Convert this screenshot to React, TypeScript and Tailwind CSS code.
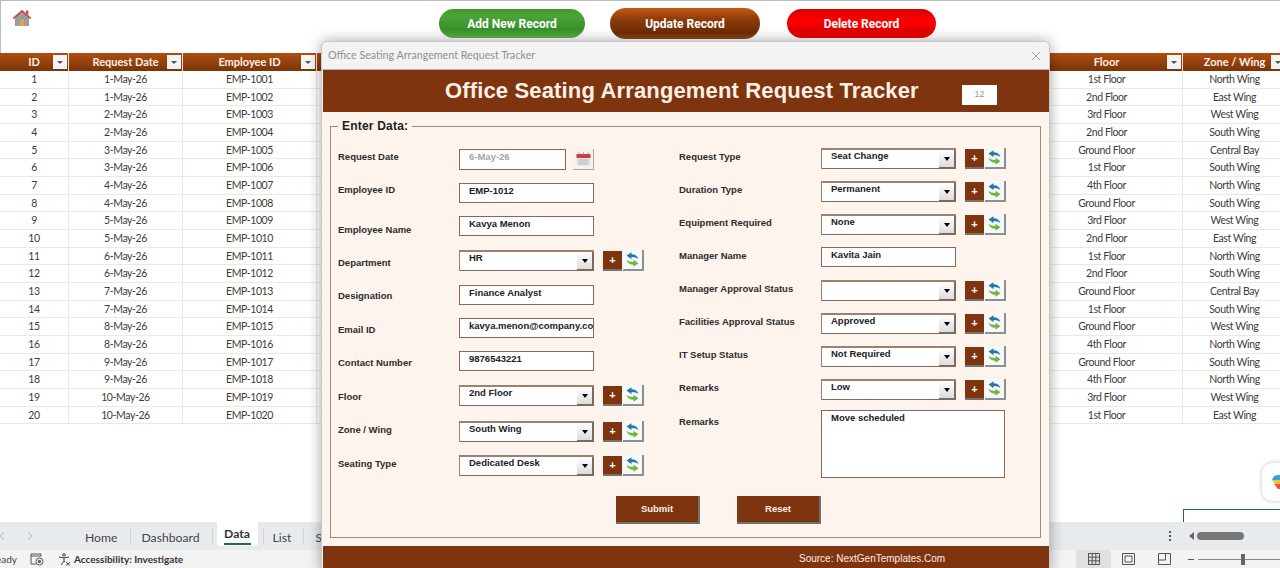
import { ChevronLeft, ChevronRight, X } from 'lucide-react'

const ROWS = [
  [1, '1-May-26', '1st Floor', 'North Wing'],
  [2, '1-May-26', '2nd Floor', 'East Wing'],
  [3, '2-May-26', '3rd Floor', 'West Wing'],
  [4, '2-May-26', '2nd Floor', 'South Wing'],
  [5, '3-May-26', 'Ground Floor', 'Central Bay'],
  [6, '3-May-26', '1st Floor', 'South Wing'],
  [7, '4-May-26', '4th Floor', 'North Wing'],
  [8, '4-May-26', 'Ground Floor', 'South Wing'],
  [9, '5-May-26', '3rd Floor', 'West Wing'],
  [10, '5-May-26', '2nd Floor', 'East Wing'],
  [11, '6-May-26', '1st Floor', 'North Wing'],
  [12, '6-May-26', '2nd Floor', 'South Wing'],
  [13, '7-May-26', 'Ground Floor', 'Central Bay'],
  [14, '7-May-26', '1st Floor', 'South Wing'],
  [15, '8-May-26', 'Ground Floor', 'West Wing'],
  [16, '8-May-26', '4th Floor', 'North Wing'],
  [17, '9-May-26', 'Ground Floor', 'South Wing'],
  [18, '9-May-26', '4th Floor', 'North Wing'],
  [19, '10-May-26', '3rd Floor', 'West Wing'],
  [20, '10-May-26', '1st Floor', 'East Wing'],
] as const

const COLS = 'grid grid-cols-[69px_114px_134px_714px_152px_104px] w-[1287px]'

type Field = { label: string; value?: string; kind: 'text' | 'combo' | 'date'; rowCls: string; labelCls: string }

const LEFT: Field[] = [
  { label: 'Request Date', value: '6-May-26', kind: 'date', rowCls: 'h-[34px]', labelCls: 'pt-[1px]' },
  { label: 'Employee ID', value: 'EMP-1012', kind: 'text', rowCls: 'h-[33px]', labelCls: 'pt-0' },
  { label: 'Employee Name', value: 'Kavya Menon', kind: 'text', rowCls: 'h-[34px]', labelCls: 'pt-[7px]' },
  { label: 'Department', value: 'HR', kind: 'combo', rowCls: 'h-[35px]', labelCls: 'pt-[6px]' },
  { label: 'Designation', value: 'Finance Analyst', kind: 'text', rowCls: 'h-[33px]', labelCls: 'pt-[4px]' },
  { label: 'Email ID', value: 'kavya.menon@company.co', kind: 'text', rowCls: 'h-[33px]', labelCls: 'pt-[5px]' },
  { label: 'Contact Number', value: '9876543221', kind: 'text', rowCls: 'h-[34px]', labelCls: 'pt-[5px]' },
  { label: 'Floor', value: '2nd Floor', kind: 'combo', rowCls: 'h-[36px]', labelCls: 'pt-[5px]' },
  { label: 'Zone / Wing', value: 'South Wing', kind: 'combo', rowCls: 'h-[34px]', labelCls: 'pt-[2px]' },
  { label: 'Seating Type', value: 'Dedicated Desk', kind: 'combo', rowCls: 'h-[34px]', labelCls: 'pt-[2px]' },
]

const RIGHT: Field[] = [
  { label: 'Request Type', value: 'Seat Change', kind: 'combo', rowCls: 'h-[33px]', labelCls: 'pt-[2px]' },
  { label: 'Duration Type', value: 'Permanent', kind: 'combo', rowCls: 'h-[33px]', labelCls: 'pt-[2px]' },
  { label: 'Equipment Required', value: 'None', kind: 'combo', rowCls: 'h-[33px]', labelCls: 'pt-[2px]' },
  { label: 'Manager Name', value: 'Kavita Jain', kind: 'text', rowCls: 'h-[33px]', labelCls: 'pt-[2px]' },
  { label: 'Manager Approval Status', value: '', kind: 'combo', rowCls: 'h-[33px]', labelCls: 'pt-[2px]' },
  { label: 'Facilities Approval Status', value: 'Approved', kind: 'combo', rowCls: 'h-[33px]', labelCls: 'pt-[2px]' },
  { label: 'IT Setup Status', value: 'Not Required', kind: 'combo', rowCls: 'h-[33px]', labelCls: 'pt-[2px]' },
  { label: 'Remarks', value: 'Low', kind: 'combo', rowCls: 'h-[31px]', labelCls: 'pt-[2px]' },
]

function HomeIcon() {
  return (
    <svg width="20" height="18" viewBox="0 0 20 18">
      <path d="M3 8 L3 17 L17 17 L17 8 L10 2 Z" fill="#9a9ea3" />
      <rect x="8" y="10" width="4" height="7" fill="#e8a33d" />
      <rect x="8.5" y="6" width="3" height="3" fill="#6fa8c9" />
      <path d="M0.5 9 L10 0.8 L19.5 9 L18 10 L10 3.4 L2 10 Z" fill="#cf4f43" />
      <rect x="14" y="1.5" width="2.4" height="4" fill="#cf4f43" />
    </svg>
  )
}

function FilterBtn({ cls }: { cls: string }) {
  return (
    <span className={`absolute top-[2px] w-[14px] h-[14px] bg-[#f4f4f4] flex items-center justify-center ${cls}`}>
      <span className="w-0 h-0 border-x-[3px] border-x-transparent border-t-[3px] border-t-[#555]" />
    </span>
  )
}

function HeadCell({ text, btnCls }: { text?: string; btnCls?: string }) {
  return (
    <div className="relative h-[18px] border-r border-[#f3e2d6] flex items-center justify-center text-[11px] font-bold text-[#fdf1e6]">
      {text}
      {btnCls && <FilterBtn cls={btnCls} />}
    </div>
  )
}

function Cell({ children }: { children?: React.ReactNode }) {
  return (
    <div className="h-[17.68px] pt-px border-r border-b border-[#f2e7df] flex items-center justify-center text-[10.5px] tracking-[-0.4px] text-[#3c3c3c]">
      {children}
    </div>
  )
}

function SheetTable() {
  return (
    <div className="font-['Lato',sans-serif]">
      <div className={`${COLS} bg-[linear-gradient(#b04e10,#8f3f0c_60%,#7a3409)]`}>
        <HeadCell text="ID" btnCls="right-[1px]" />
        <HeadCell text="Request Date" btnCls="right-[1px]" />
        <HeadCell text="Employee ID" btnCls="right-[1px]" />
        <HeadCell />
        <HeadCell text="Floor" btnCls="right-[1px]" />
        <HeadCell text="Zone / Wing" btnCls="right-[1px]" />
      </div>
      {ROWS.map(([id, date, floor, zone]) => (
        <div key={id} className={COLS}>
          <Cell>{id}</Cell>
          <Cell>{date}</Cell>
          <Cell>EMP-{1000 + id}</Cell>
          <Cell />
          <Cell>{floor}</Cell>
          <Cell>{zone}</Cell>
        </div>
      ))}
    </div>
  )
}

function ArrowBtn() {
  return (
    <span className="w-[17px] h-full bg-[linear-gradient(#ffffff,#dcdcdc)] border-r-2 border-b-2 border-[#7d6a5e] flex items-center justify-center">
      <span className="w-0 h-0 border-x-[3.5px] border-x-transparent border-t-[4px] border-t-black" />
    </span>
  )
}

function RefreshIcon() {
  return (
    <svg width="13" height="15" viewBox="0 0 13 15">
      <path d="M0.5 3.6 L5.5 0.2 V2.2 Q11 2.2 12.5 7 Q10 5 5.5 5.1 V7.2 Z" fill="#2277ad" />
      <path d="M12.5 11.2 L7.5 14.8 V12.8 Q2 12.8 0.5 8 Q3 10 7.5 9.9 V7.8 Z" fill="#6fb43f" />
    </svg>
  )
}

function AddRefresh() {
  return (
    <div className="flex h-[21px] gap-px">
      <button className="w-[19px] h-[20px] mt-px bg-[#7f3410] border-b-2 border-[#77706b] text-white text-[11px] font-bold leading-none flex items-center justify-center">+</button>
      <button className="w-[21px] h-[21px] bg-[#f7f9f9] border-r-2 border-b-2 border-[#8b9094] flex items-center justify-center">
        <RefreshIcon />
      </button>
    </div>
  )
}

function CalendarIcon() {
  return (
    <span className="w-[21px] h-[21px] ml-[7px] bg-[#f5f2f0] border-r border-b border-[#a5a5a5] flex items-center justify-center">
      <svg width="15" height="14" viewBox="0 0 15 14">
        <rect x="0.5" y="2" width="14" height="11.5" fill="#e6e6e6" />
        <rect x="0.5" y="2" width="14" height="4" fill="#c9403c" />
        <path d="M3 0.5V3M7.5 0.5V3M12 0.5V3" stroke="#8d8d8d" />
        <path d="M2.5 8H12.5M2.5 10H12.5M2.5 12H12.5" stroke="#b5b5b5" />
      </svg>
    </span>
  )
}

function Control({ f, wide }: { f: Field; wide: number }) {
  const box = 'bg-white border border-[#86695a] pl-[9px] pt-px text-[9.5px] font-bold text-[#222] leading-[12px] overflow-hidden whitespace-nowrap'
  if (f.kind === 'date') {
    return (
      <div className="flex">
        <div className={`${box} w-[107px] h-[21px] font-bold text-[#a6a6a6]`}>{f.value}</div>
        <CalendarIcon />
      </div>
    )
  }
  if (f.kind === 'text') {
    return <div className={`${box} h-[20px]`} style={{ width: wide }}>{f.value}</div>
  }
  return (
    <div className="flex items-start gap-[9px]">
      <div className="flex h-[21px] border-t-2 border-l border-[#9a8273] bg-white" style={{ width: wide }}>
        <div className="flex-1 pl-[9px] text-[9.5px] font-bold text-[#222] leading-[12px] border-b border-[#86695a] whitespace-nowrap overflow-hidden">{f.value}</div>
        <ArrowBtn />
      </div>
      <AddRefresh />
    </div>
  )
}

function FormRow({ f, labelW }: { f: Field; labelW: string }) {
  return (
    <div className={`flex items-start ${f.rowCls}`}>
      <div className={`${labelW} ${f.labelCls} text-[9.5px] font-bold text-[#2c2c2c]`}>{f.label}</div>
      <Control f={f} wide={135} />
    </div>
  )
}

function FormDialog() {
  return (
    <div className="absolute left-[321px] top-[41px] w-[729px] h-[532px] rounded-t-[6px] border border-[#c9c9c9] bg-[#fdf4ee] shadow-[0_0_14px_rgba(0,0,0,0.35)] font-['Liberation_Sans',sans-serif] flex flex-col">
      <div className="h-[28px] bg-[#f3f3f3] rounded-t-[6px] border-b border-[#b5b5b5] flex items-center justify-between pl-[6px] pr-[5px] text-[10.7px] text-[#8f8f8f] font-['Lato',sans-serif]">
        Office Seating Arrangement Request Tracker
        <X size={16} strokeWidth={1.1} className="text-[#8a8a8a]" />
      </div>
      <div className="h-[42px] ml-px bg-[#7f3410] relative flex items-center pl-[122px] pb-[2px] text-[22px] font-bold tracking-[0.15px] text-[#fdf1e6]">
        Office Seating Arrangement Request Tracker
        <span className="absolute right-[52px] top-[15px] w-[35px] h-[20px] bg-white text-[9px] font-normal tracking-normal text-[#999] flex items-center justify-center">12</span>
      </div>
      <div className="flex-1 px-[8px] pt-[9px]">
        <fieldset className="relative h-[417px] border border-[#9f8b7e] px-[7px]">
          <legend className="px-[4px] text-[12px] font-bold text-[#1d1d1d] leading-[10px] tracking-[0.2px]">Enter Data:</legend>
          <div className="flex pt-[18px]">
            <div className="w-[341px]">
              {LEFT.map((f) => <FormRow key={f.label} f={f} labelW="w-[121px]" />)}
            </div>
            <div className="w-[340px] -mt-px">
              {RIGHT.map((f) => <FormRow key={f.label} f={f} labelW="w-[142px]" />)}
              <div className="flex items-start">
                <div className="w-[142px] pt-[5px] text-[9.5px] font-bold text-[#2c2c2c]">Remarks</div>
                <div className="w-[184px] h-[68px] bg-white border border-[#86695a] pl-[9px] pt-0 text-[9.5px] font-bold text-[#222]">Move scheduled</div>
              </div>
            </div>
          </div>
          <div className="absolute left-[285px] top-[365px] flex gap-[37px]">
            <button className="w-[84px] h-[28px] pt-px bg-[#7f3410] border-r-2 border-b-2 border-[#6e6e6e] text-[9.5px] font-bold text-[#fdf1e6]">Submit</button>
            <button className="w-[84px] h-[28px] pt-px bg-[#7f3410] border-r-2 border-b-2 border-[#6e6e6e] text-[9.5px] font-bold text-[#fdf1e6]">Reset</button>
          </div>
        </fieldset>
      </div>
      <div className="h-[26px] ml-px bg-[#7f3410] pl-[476px] pt-[5px] text-[10px] text-[#fbeee5]">Source: NextGenTemplates.Com</div>
    </div>
  )
}

function SheetTabs() {
  return (
    <div className="h-[28px] bg-[#e8ebee] flex items-start text-[12.2px] text-[#444] font-['Lato',sans-serif]">
      <ChevronLeft size={14} strokeWidth={1.2} className="ml-[-5px] mt-[7px] text-[#9a9a9a]" />
      <ChevronRight size={14} strokeWidth={1.2} className="ml-[14px] mt-[7px] text-[#9a9a9a]" />
      <span className="ml-[48px] mt-[7px]">Home</span>
      <span className="ml-[12px] mt-[6px] w-px h-[16px] bg-[#d2d5d8]" />
      <span className="ml-[11px] mt-[7px]">Dashboard</span>
      <span className="ml-[12px] mt-[6px] w-px h-[16px] bg-[#d2d5d8]" />
      <span className="ml-[4px] w-[41px] h-[24px] bg-white rounded-b-[4px] text-center pt-[3px] font-bold text-[#333] relative">
        Data
        <span className="absolute left-[7px] right-[7px] bottom-[1px] h-[2px] bg-[#1f6b45]" />
      </span>
      <span className="ml-[5px] mt-[6px] w-px h-[16px] bg-[#d2d5d8]" />
      <span className="ml-[9px] mt-[7px]">List</span>
      <span className="ml-[12px] mt-[6px] w-px h-[16px] bg-[#d2d5d8]" />
      <span className="ml-[11px] mt-[7px]">S</span>
      <span className="ml-auto mt-[9px] flex flex-col gap-[2px] mr-[109px]">
        <span className="w-[2px] h-[2px] bg-[#555]" />
        <span className="w-[2px] h-[2px] bg-[#555]" />
        <span className="w-[2px] h-[2px] bg-[#555]" />
      </span>
    </div>
  )
}

function StatusBar() {
  return (
    <div className="h-[18px] bg-[#f3f3f3] flex items-center text-[10px] text-[#444] font-['Lato',sans-serif] relative">
      <span className="ml-[-10px] w-[22px]">Ready</span>
      <svg className="ml-[18px]" width="14" height="13" viewBox="0 0 14 13" fill="none" stroke="#555">
        <path d="M1 1H11V3H1ZM1 3V11H6" />
        <circle cx="9.5" cy="8.5" r="3.5" />
        <circle cx="9.5" cy="8.5" r="1.2" fill="#555" />
      </svg>
      <svg className="ml-[14px]" width="13" height="13" viewBox="0 0 13 13" fill="none" stroke="#444">
        <circle cx="6" cy="2" r="1.3" />
        <path d="M1 4L6 5L11 4M6 5V8L3 12M6 8L7 9M8 9L12 12.5M12 9L8 12.5" />
      </svg>
      <span className="ml-[3px] font-bold text-[#333]">Accessibility: Investigate</span>
      <div className="ml-auto flex items-center h-full">
        <span className="w-[35px] h-full bg-[#e0e0e0] flex items-center justify-center">
          <svg width="12" height="12" viewBox="0 0 12 12" fill="none" stroke="#555"><path d="M.5.5h11v11H.5zM.5 4.2h11M.5 7.8h11M4.2.5v11M7.8.5v11" /></svg>
        </span>
        <svg className="ml-[11px]" width="13" height="12" viewBox="0 0 13 12" fill="none" stroke="#555"><path d="M.5.5h12v11H.5zM3 3h7v6H3z" /></svg>
        <svg className="ml-[23px]" width="13" height="12" viewBox="0 0 13 12" fill="none" stroke="#555"><path d="M.5.5h12v11H.5zM.5 7h7V.5" /></svg>
        <span className="ml-[17px] w-[6px] h-px bg-[#555]" />
        <span className="ml-[4px] w-[82px] h-px bg-[#888] relative">
          <span className="absolute left-[43px] top-[-5px] w-[4px] h-[11px] bg-[#666]" />
        </span>
      </div>
    </div>
  )
}

export default function App() {
  return (
    <div className="relative w-[1280px] h-[568px] overflow-hidden bg-white flex flex-col">
      <div className="h-[53px] border-t border-l border-[#bdbdbd] flex items-start font-['Roboto',sans-serif]">
        <span className="ml-[11px] mt-[8px]"><HomeIcon /></span>
        <button className="ml-[407px] mt-[8px] w-[146px] h-[29px] rounded-full bg-[linear-gradient(#3f9a2c,#4aa437_25%,#38902a_70%,#5db54a)] text-[12px] font-bold text-[#fff]">Add New Record</button>
        <button className="ml-[25px] mt-[7px] w-[150px] h-[31px] rounded-full bg-[linear-gradient(#c8590f,#8e3c0a_35%,#6e2c05_80%,#93471a)] text-[12px] font-bold text-[#fff]">Update Record</button>
        <button className="ml-[27px] mt-[8px] w-[149px] h-[29px] rounded-full bg-[linear-gradient(#d80000,#ff0000_40%,#e00000_75%,#f10000)] text-[12px] font-bold text-[#fff]">Delete Record</button>
      </div>
      <div className="flex-1 min-h-0">
        <SheetTable />
      </div>
      <SheetTabs />
      <StatusBar />

      {/* selected cell, scrollbar and copilot sit on top of the sheet */}
      <div className="absolute left-[1183px] top-[509px] w-[100px] h-[13px] border-t border-l border-[#1f6b45]" />
      <div className="absolute left-[1262px] top-[463px] w-[30px] h-[38px] rounded-[10px] bg-white shadow-[0_0_4px_rgba(0,0,0,0.25)] flex items-center pl-[10px]">
        <svg width="10" height="16" viewBox="0 0 10 16">
          <path d="M0 8Q0 1 6 1H10V6H0Z" fill="#3aa0d8" />
          <path d="M0 6H10V11H4Z" fill="#f1c232" />
          <path d="M2 10H10V15H6Z" fill="#e8573f" />
        </svg>
      </div>
      <div className="absolute left-[1189px] top-[532px] flex items-center gap-[3px]">
        <span className="w-0 h-0 border-y-[4px] border-y-transparent border-r-[5px] border-r-[#666]" />
        <span className="w-[47px] h-[8px] rounded-full bg-[#777]" />
      </div>
      <FormDialog />
    </div>
  )
}
